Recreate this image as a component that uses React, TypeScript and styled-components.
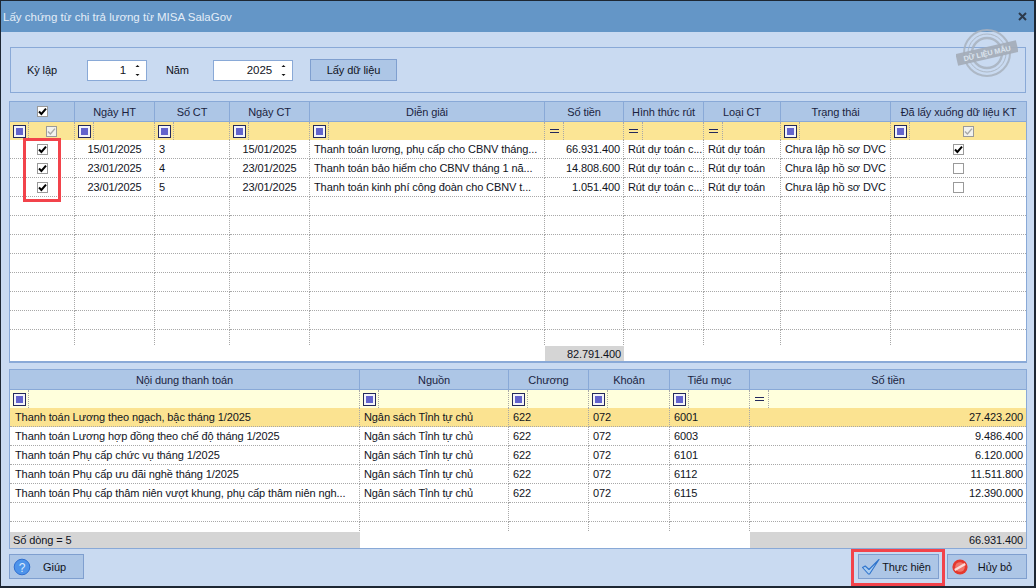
import React from 'react'
import styled, { createGlobalStyle } from 'styled-components'

const GlobalStyle = createGlobalStyle`
  html, body {
    margin: 0;
    padding: 0;
    background: #1d2733;
  }
  * {
    box-sizing: border-box;
  }
`

const Window = styled.div`
  position: relative;
  width: 1036px;
  height: 588px;
  overflow: hidden;
  display: flex;
  flex-direction: column;
  background: #c9daf1;
  border-style: solid;
  border-color: #1d2733;
  border-width: 1px 2px 2px 1px;
  font-family: 'Liberation Sans', Arial, sans-serif;
  font-size: 11px;
  letter-spacing: -0.1px;
  color: #10131c;
`

const TitleBar = styled.div`
  height: 31px;
  flex: none;
  display: flex;
  align-items: center;
  justify-content: space-between;
  padding: 0 5px 0 2px;
  background: #6496c7;
  color: #e3edf7;
  font-size: 11.5px;
  letter-spacing: 0;
`

const CloseButton = styled.svg`
  width: 9px;
  height: 9px;
  margin-right: 2px;
`

const Body = styled.div`
  flex: 1;
  display: flex;
  flex-direction: column;
  padding: 15px 7px 0 8px;
`

const FilterGroup = styled.div`
  height: 46px;
  margin: 0 1px 8px;
  padding: 0 16px;
  display: flex;
  align-items: center;
  border: 1px solid #89a9d7;
`

const FieldLabel = styled.span<{ $width: number }>`
  width: ${p => p.$width}px;
  flex: none;
`

const SpinBox = styled.div<{ $width: number; $gap: number }>`
  width: ${p => p.$width}px;
  margin-right: ${p => p.$gap}px;
  height: 21px;
  flex: none;
  display: flex;
  align-items: center;
  justify-content: flex-end;
  background: #fff;
  border: 1px solid #89a9d7;
  font-size: 11.5px;
`

const SpinArrows = styled.svg`
  width: 7px;
  height: 13px;
  margin: 0 5px 0 8px;
`

const FetchButton = styled.button`
  width: 87px;
  height: 22px;
  padding: 0;
  font: inherit;
  letter-spacing: inherit;
  color: inherit;
  background: #adc6e6;
  border: 1px solid #7f9fcf;
`

const GridBox = styled.div<{ $bottom: number; $gap: number }>`
  display: flex;
  flex-direction: column;
  border: 1px solid #89a9d7;
  border-bottom-width: ${p => p.$bottom}px;
  margin-bottom: ${p => p.$gap}px;
  background: #fff;
`

const Row = styled.div<{ $cols: string; $height: number; $bg?: string }>`
  display: grid;
  grid-template-columns: ${p => p.$cols};
  height: ${p => p.$height}px;
  flex: none;
  background: ${p => p.$bg || 'transparent'};
`

const RowsArea = styled.div<{ $height: number }>`
  height: ${p => p.$height}px;
  overflow: hidden;
  flex: none;
`

const HeaderCell = styled.div`
  display: flex;
  align-items: center;
  justify-content: center;
  background: #adc6e6;
  border-right: 1px solid #89a9d7;
  border-bottom: 1px solid #89a9d7;
  color: #1b1f3f;
  white-space: nowrap;
  overflow: hidden;

  &:last-child {
    border-right: 0;
  }
`

const FilterCell = styled.div`
  display: flex;
  align-items: center;
  border-right: 1px dotted #a8a8a8;

  &:last-child {
    border-right: 0;
  }
`

const FilterSlot = styled.div`
  width: 19px;
  height: 100%;
  flex: none;
  display: flex;
  align-items: center;
  justify-content: center;
  padding-left: 1px;
  border-right: 1px dotted #a8a8a8;
`

const FilterRest = styled.div`
  flex: 1;
  display: flex;
  justify-content: center;
`

const ContainsIcon = styled.span`
  width: 13px;
  height: 13px;
  display: flex;
  align-items: center;
  justify-content: center;
  background: #f4f4f8;
  border: 1px solid #23285c;

  &::after {
    content: '';
    width: 7px;
    height: 7px;
    background: #6464cc;
  }
`

const EqualsIcon = styled.span`
  width: 9px;
  height: 4px;
  border-top: 1px solid #23285c;
  border-bottom: 1px solid #23285c;
`

const DataCell = styled.div<{ $align?: string }>`
  display: flex;
  align-items: center;
  justify-content: ${p => p.$align || 'flex-start'};
  padding: ${p => (p.$align === 'center' ? '0' : '0 3px 0 4px')};
  border-right: 1px dotted #a8a8a8;
  border-bottom: 1px dotted #a8a8a8;
  white-space: nowrap;
  overflow: hidden;

  &:first-child {
    padding-left: ${p => (p.$align === 'center' ? '0' : '5px')};
  }

  &:last-child {
    border-right: 0;
  }
`

const SummaryCell = styled.div<{ $gray?: boolean; $align?: string }>`
  display: flex;
  align-items: center;
  justify-content: ${p => p.$align || 'flex-start'};
  padding: 0 3px 0 3px;
  background: ${p => (p.$gray ? '#d5d5d5' : '#fff')};
  white-space: nowrap;
`

const Box = styled.span<{ $muted?: boolean }>`
  width: 11px;
  height: 11px;
  flex: none;
  display: flex;
  align-items: center;
  justify-content: center;
  background: ${p => (p.$muted ? '#f2f2ee' : '#fff')};
  border: 1px solid #9a9a9a;
`

const BoxMark = styled.svg`
  width: 9px;
  height: 9px;
`

const ButtonBar = styled.div`
  display: flex;
  align-items: center;
  justify-content: space-between;
`

const ActionGroup = styled.div`
  display: flex;
  gap: 8px;
`

const ActionButton = styled.button<{ $width: number }>`
  width: ${p => p.$width}px;
  height: 25px;
  padding: 0 5px 0 3px;
  display: flex;
  align-items: center;
  font: inherit;
  letter-spacing: inherit;
  color: inherit;
  background: #adc6e6;
  border: 1px solid #7f9fcf;
`

const ButtonIcon = styled.svg`
  width: 18px;
  height: 18px;
  flex: none;
`

const ButtonText = styled.span`
  flex: 1;
  text-align: center;
`

const RedFrame = styled.div<{ $x: number; $y: number; $w: number; $h: number }>`
  position: absolute;
  left: ${p => p.$x}px;
  top: ${p => p.$y}px;
  width: ${p => p.$w}px;
  height: ${p => p.$h}px;
  border: 3px solid #f2434b;
  pointer-events: none;
`

const Stamp = styled.svg`
  position: absolute;
  left: 955px;
  top: 25px;
  width: 62px;
  height: 54px;
  pointer-events: none;
`

const topCols = '65px 80px 75px 80px 235px 79px 80px 77px 110px 1fr'
const bottomCols = '350px 149px 80px 81px 80px 1fr'

const topHeaders = ['', 'Ngày HT', 'Số CT', 'Ngày CT', 'Diễn giải', 'Số tiền', 'Hình thức rút', 'Loại CT', 'Trạng thái', 'Đã lấy xuống dữ liệu KT']
const topFilters = ['box', 'c', 'c', 'c', 'c', 'e', 'e', 'e', 'c', 'box']

const vouchers = [
  { ht: '15/01/2025', no: '3', ct: '15/01/2025', desc: 'Thanh toán lương, phụ cấp cho CBNV tháng...', amount: '66.931.400', done: true },
  { ht: '23/01/2025', no: '4', ct: '23/01/2025', desc: 'Thanh toán bảo hiểm cho CBNV tháng 1 nă...', amount: '14.808.600', done: false },
  { ht: '23/01/2025', no: '5', ct: '23/01/2025', desc: 'Thanh toán kinh phí công đoàn cho CBNV t...', amount: '1.051.400', done: false },
]

const bottomHeaders = ['Nội dung thanh toán', 'Nguồn', 'Chương', 'Khoản', 'Tiểu mục', 'Số tiền']
const bottomFilters = ['c', 'c', 'c', 'c', 'c', 'e']

const payments = [
  { name: 'Thanh toán Lương theo ngạch, bậc tháng 1/2025', item: '6001', amount: '27.423.200' },
  { name: 'Thanh toán Lương hợp đồng theo chế độ tháng 1/2025', item: '6003', amount: '9.486.400' },
  { name: 'Thanh toán Phụ cấp chức vụ tháng 1/2025', item: '6101', amount: '6.120.000' },
  { name: 'Thanh toán Phụ cấp ưu đãi nghề tháng 1/2025', item: '6112', amount: '11.511.800' },
  { name: 'Thanh toán Phụ cấp thâm niên vượt khung, phụ cấp thâm niên ngh...', item: '6115', amount: '12.390.000' },
]

const CheckBox: React.FC<{ checked?: boolean; muted?: boolean }> = ({ checked, muted }) => (
  <Box $muted={muted}>
    {checked && (
      <BoxMark viewBox="0 0 9 9">
        <path
          d="M1 4.5 L3.4 7 L8 1.6"
          fill="none"
          stroke={muted ? '#a8a8a8' : '#000'}
          strokeWidth={muted ? 1.4 : 2}
        />
      </BoxMark>
    )}
  </Box>
)

const FilterRow: React.FC<{ cols: string; bg: string; kinds: string[] }> = ({ cols, bg, kinds }) => (
  <Row $cols={cols} $height={18} $bg={bg}>
    {kinds.map((kind, i) => (
      <FilterCell key={i}>
        <FilterSlot>{kind === 'e' ? <EqualsIcon /> : <ContainsIcon />}</FilterSlot>
        {kind === 'box' && (
          <FilterRest>
            <CheckBox checked muted />
          </FilterRest>
        )}
      </FilterCell>
    ))}
  </Row>
)

const Spinner = () => (
  <SpinArrows viewBox="0 0 7 13">
    <path d="M3.5 1 L5.5 3 L1.5 3 Z M3.5 12 L5.5 10 L1.5 10 Z" fill="#111" />
  </SpinArrows>
)

const App: React.FC = () => {
  const emptyTop = Array.from({ length: 11 - vouchers.length })
  const emptyBottom = Array.from({ length: 7 - payments.length })

  return (
    <Window>
      <GlobalStyle />
      <TitleBar>
        Lấy chứng từ chi trả lương từ MISA SalaGov
        <CloseButton viewBox="0 0 9 9">
          <path d="M1 1 L8 8 M8 1 L1 8" stroke="#2c3a4c" strokeWidth="2" />
        </CloseButton>
      </TitleBar>

      <Body>
        <FilterGroup>
          <FieldLabel $width={60}>Kỳ lập</FieldLabel>
          <SpinBox $width={60} $gap={19}>
            1<Spinner />
          </SpinBox>
          <FieldLabel $width={47}>Năm</FieldLabel>
          <SpinBox $width={80} $gap={17}>
            2025<Spinner />
          </SpinBox>
          <FetchButton>Lấy dữ liệu</FetchButton>
        </FilterGroup>

        <GridBox $bottom={2} $gap={6}>
          <Row $cols={topCols} $height={20}>
            {topHeaders.map((title, i) => (
              <HeaderCell key={i}>{i === 0 ? <CheckBox checked /> : title}</HeaderCell>
            ))}
          </Row>
          <FilterRow cols={topCols} bg="#fbe595" kinds={topFilters} />
          <RowsArea $height={206}>
            {vouchers.map(v => (
              <Row key={v.no} $cols={topCols} $height={19}>
                <DataCell $align="center"><CheckBox checked /></DataCell>
                <DataCell $align="center">{v.ht}</DataCell>
                <DataCell>{v.no}</DataCell>
                <DataCell $align="center">{v.ct}</DataCell>
                <DataCell>{v.desc}</DataCell>
                <DataCell $align="flex-end">{v.amount}</DataCell>
                <DataCell>Rút dự toán c...</DataCell>
                <DataCell>Rút dự toán</DataCell>
                <DataCell>Chưa lập hồ sơ DVC</DataCell>
                <DataCell $align="center"><CheckBox checked={v.done} /></DataCell>
              </Row>
            ))}
            {emptyTop.map((_, r) => (
              <Row key={r} $cols={topCols} $height={19}>
                {topHeaders.map((_, i) => <DataCell key={i} />)}
              </Row>
            ))}
          </RowsArea>
          <Row $cols={topCols} $height={15}>
            <SummaryCell />
            <SummaryCell />
            <SummaryCell />
            <SummaryCell />
            <SummaryCell />
            <SummaryCell $gray $align="flex-end">82.791.400</SummaryCell>
            <SummaryCell />
            <SummaryCell />
            <SummaryCell />
            <SummaryCell />
          </Row>
        </GridBox>

        <GridBox $bottom={1} $gap={5}>
          <Row $cols={bottomCols} $height={20}>
            {bottomHeaders.map(title => <HeaderCell key={title}>{title}</HeaderCell>)}
          </Row>
          <FilterRow cols={bottomCols} bg="#ffffdc" kinds={bottomFilters} />
          <RowsArea $height={124}>
            {payments.map((p, r) => (
              <Row key={p.item} $cols={bottomCols} $height={19} $bg={r === 0 ? '#fbe391' : undefined}>
                <DataCell>{p.name}</DataCell>
                <DataCell>Ngân sách Tỉnh tự chủ</DataCell>
                <DataCell>622</DataCell>
                <DataCell>072</DataCell>
                <DataCell>{p.item}</DataCell>
                <DataCell $align="flex-end">{p.amount}</DataCell>
              </Row>
            ))}
            {emptyBottom.map((_, r) => (
              <Row key={r} $cols={bottomCols} $height={19}>
                {bottomHeaders.map(title => <DataCell key={title} />)}
              </Row>
            ))}
          </RowsArea>
          <Row $cols={bottomCols} $height={16}>
            <SummaryCell $gray>Số dòng = 5</SummaryCell>
            <SummaryCell />
            <SummaryCell />
            <SummaryCell />
            <SummaryCell />
            <SummaryCell $gray $align="flex-end">66.931.400</SummaryCell>
          </Row>
        </GridBox>

        <ButtonBar>
          <ActionButton $width={75}>
            <ButtonIcon viewBox="0 0 18 18">
              <circle cx="9" cy="9" r="7.8" fill="#4d93ea" stroke="#2f6fd0" />
              <text x="9" y="13.5" textAnchor="middle" fontSize="12" fill="#dcebfb" fontFamily="Liberation Sans">?</text>
            </ButtonIcon>
            <ButtonText>Giúp</ButtonText>
          </ActionButton>
          <ActionGroup>
            <ActionButton $width={81}>
              <ButtonIcon viewBox="0 0 18 18">
                <path d="M0.5 9.5 L3.2 8 L7 11.5 L17 1.5 L7.6 16 L6.4 16 Z" fill="#a9cdf2" stroke="#2f74cc" strokeWidth="1.1" strokeLinejoin="round" />
              </ButtonIcon>
              <ButtonText>Thực hiện</ButtonText>
            </ActionButton>
            <ActionButton $width={80}>
              <ButtonIcon viewBox="0 0 18 18">
                <circle cx="9" cy="9" r="7.6" fill="#e4382d" />
                <circle cx="9" cy="9" r="4.8" fill="#f0776c" />
                <path d="M3.8 12 L14.2 6" stroke="#fbdcd8" strokeWidth="2.4" />
              </ButtonIcon>
              <ButtonText>Hủy bỏ</ButtonText>
            </ActionButton>
          </ActionGroup>
        </ButtonBar>
      </Body>

      <Stamp viewBox="0 0 62 54">
        <g fill="none" stroke="#a9b3bf" opacity="0.85">
          <circle cx="31" cy="27" r="23" strokeWidth="2" />
          <circle cx="31" cy="27" r="19" strokeWidth="1" />
          <circle cx="31" cy="27" r="15" strokeWidth="2.4" />
        </g>
        <g transform="rotate(-13 31 27)">
          <rect x="0" y="21" width="62" height="12" fill="#a4adb8" opacity="0.92" />
          <text x="31" y="30" textAnchor="middle" fontSize="7.4" fontWeight="700" fill="#dbe4ee" fontFamily="Liberation Sans">DỮ LIỆU MẪU</text>
        </g>
      </Stamp>

      <RedFrame $x={22} $y={137} $w={38} $h={64} />
      <RedFrame $x={850} $y={548} $w={94} $h={37} />
    </Window>
  )
}

export default App
